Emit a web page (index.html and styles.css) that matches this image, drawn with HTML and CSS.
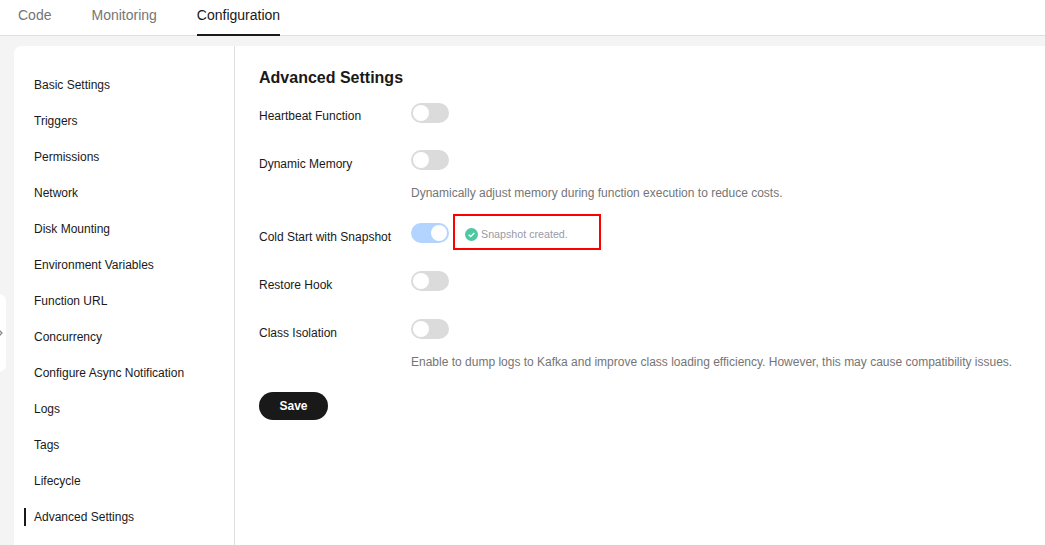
FILE: index.html
```html
<!DOCTYPE html>
<html lang="en">
<head>
<meta charset="utf-8">
<title>Advanced Settings</title>
<link rel="stylesheet" href="styles.css">
</head>
<body>
<nav class="tabs">
  <a class="tab">Code</a>
  <a class="tab">Monitoring</a>
  <a class="tab tab-active">Configuration</a>
</nav>
<div class="workspace">
  <div class="collapse-handle">
    <svg class="collapse-icon" width="5" height="8" viewBox="0 0 5 8"><path d="M1 1l3 3-3 3" fill="none" stroke="#8a8a8a" stroke-width="1.3"/></svg>
  </div>
  <div class="panel">
    <ul class="side-menu">
      <li>Basic Settings</li>
      <li>Triggers</li>
      <li>Permissions</li>
      <li>Network</li>
      <li>Disk Mounting</li>
      <li>Environment Variables</li>
      <li>Function URL</li>
      <li>Concurrency</li>
      <li>Configure Async Notification</li>
      <li>Logs</li>
      <li>Tags</li>
      <li>Lifecycle</li>
      <li class="active">Advanced Settings</li>
    </ul>
    <main class="content">
      <h2 class="title">Advanced Settings</h2>
      <div class="row row-first">
        <span class="label">Heartbeat Function</span>
        <span class="switch"></span>
      </div>
      <div class="row row-hint">
        <span class="label">Dynamic Memory</span>
        <div class="control">
          <span class="switch"></span>
          <p class="hint">Dynamically adjust memory during function execution to reduce costs.</p>
        </div>
      </div>
      <div class="row">
        <span class="label">Cold Start with Snapshot</span>
        <span class="switch switch-on"></span>
        <span class="status">
          <svg class="status-icon" width="13" height="13" viewBox="0 0 13 13"><circle cx="6.5" cy="6.5" r="6.5" fill="#4cc9a0"/><path d="M3.7 6.7l2 1.9 3.6-3.7" fill="none" stroke="#fff" stroke-width="1.4"/></svg>
          Snapshot created.
        </span>
      </div>
      <div class="row">
        <span class="label">Restore Hook</span>
        <span class="switch"></span>
      </div>
      <div class="row row-hint">
        <span class="label">Class Isolation</span>
        <div class="control">
          <span class="switch"></span>
          <p class="hint">Enable to dump logs to Kafka and improve class loading efficiency. However, this may cause compatibility issues.</p>
        </div>
      </div>
      <button class="save" type="button">Save</button>
    </main>
  </div>
</div>
</body>
</html>
```

FILE: styles.css
```css
*, *::before, *::after { box-sizing: border-box; }
html, body { margin: 0; height: 100%; overflow: hidden; }
body {
  width: 1045px;
  height: 545px;
  background: #f4f4f4;
  font-family: "Liberation Sans", Arial, sans-serif;
  font-size: 12px;
  color: #191919;
  display: flex;
  flex-direction: column;
}
.tabs {
  height: 36px;
  flex: none;
  background: #fff;
  border-bottom: 1px solid #dfdfdf;
  display: flex;
  gap: 40px;
  padding-left: 18px;
}
.tab {
  font-size: 14px;
  line-height: 31px;
  color: #757575;
  height: 36px;
}
.tab-active {
  color: #191919;
  border-bottom: 2px solid #191919;
}
.workspace {
  flex: 1;
  display: flex;
  padding: 10px 0 0 14px;
  position: relative;
  min-height: 0;
}
.collapse-handle {
  position: absolute;
  left: -8px;
  top: 258px;
  width: 14px;
  height: 78px;
  background: #fff;
  border-radius: 8px;
  display: flex;
  align-items: center;
  justify-content: flex-end;
}
.collapse-icon { margin-right: 3px; }
.panel {
  flex: 1;
  background: #fff;
  border-radius: 8px 0 0 0;
  display: flex;
  min-width: 0;
}
.side-menu {
  list-style: none;
  margin: 0;
  padding: 21px 0 0 10px;
  width: 221px;
  flex: none;
  border-right: 1px solid #dfdfdf;
}
.side-menu li {
  height: 36px;
  line-height: 36px;
  padding-left: 10px;
  white-space: nowrap;
  position: relative;
}
.side-menu li.active::before {
  content: "";
  position: absolute;
  left: 0;
  top: 9px;
  width: 2px;
  height: 18px;
  background: #191919;
}
.content {
  flex: 1;
  padding: 21px 0 0 24px;
  min-width: 0;
}
.title {
  margin: 0 0 14px;
  font-size: 16px;
  line-height: 22px;
  font-weight: 700;
}
.row {
  display: flex;
  align-items: flex-start;
  height: 48px;
}
.row-first { height: 47px; }
.row-hint { height: auto; margin-bottom: 21px; }
.label {
  width: 152px;
  flex: none;
  line-height: 24px;
  margin-top: 2px;
}
.row-first .label { margin-top: 1px; }
.switch {
  display: block;
  width: 38px;
  height: 20px;
  border-radius: 10px;
  background: #dbdbdb;
  position: relative;
  flex: none;
}
.switch::after {
  content: "";
  position: absolute;
  left: 2px;
  top: 2px;
  width: 16px;
  height: 16px;
  border-radius: 50%;
  background: #fff;
}
.switch-on { background: #b3d4ff; }
.switch-on::after { left: 20px; }
.hint {
  margin: 14px 0 0;
  line-height: 18px;
  color: #757575;
  white-space: nowrap;
}
.status {
  margin: 5px 0 0 16px;
  display: flex;
  align-items: center;
  gap: 3px;
  font-size: 10.7px;
  line-height: 13px;
  color: #999aa6;
  position: relative;
}
.status::after {
  content: "";
  position: absolute;
  left: -12px;
  top: -14px;
  width: 148px;
  height: 36px;
  border: 2px solid #f00;
}
.save {
  display: block;
  width: 69px;
  height: 28px;
  margin-top: 7px;
  border: 0;
  border-radius: 14px;
  background: #191919;
  color: #fff;
  font: 700 12px/28px "Liberation Sans", Arial, sans-serif;
  padding: 0;
}
```
